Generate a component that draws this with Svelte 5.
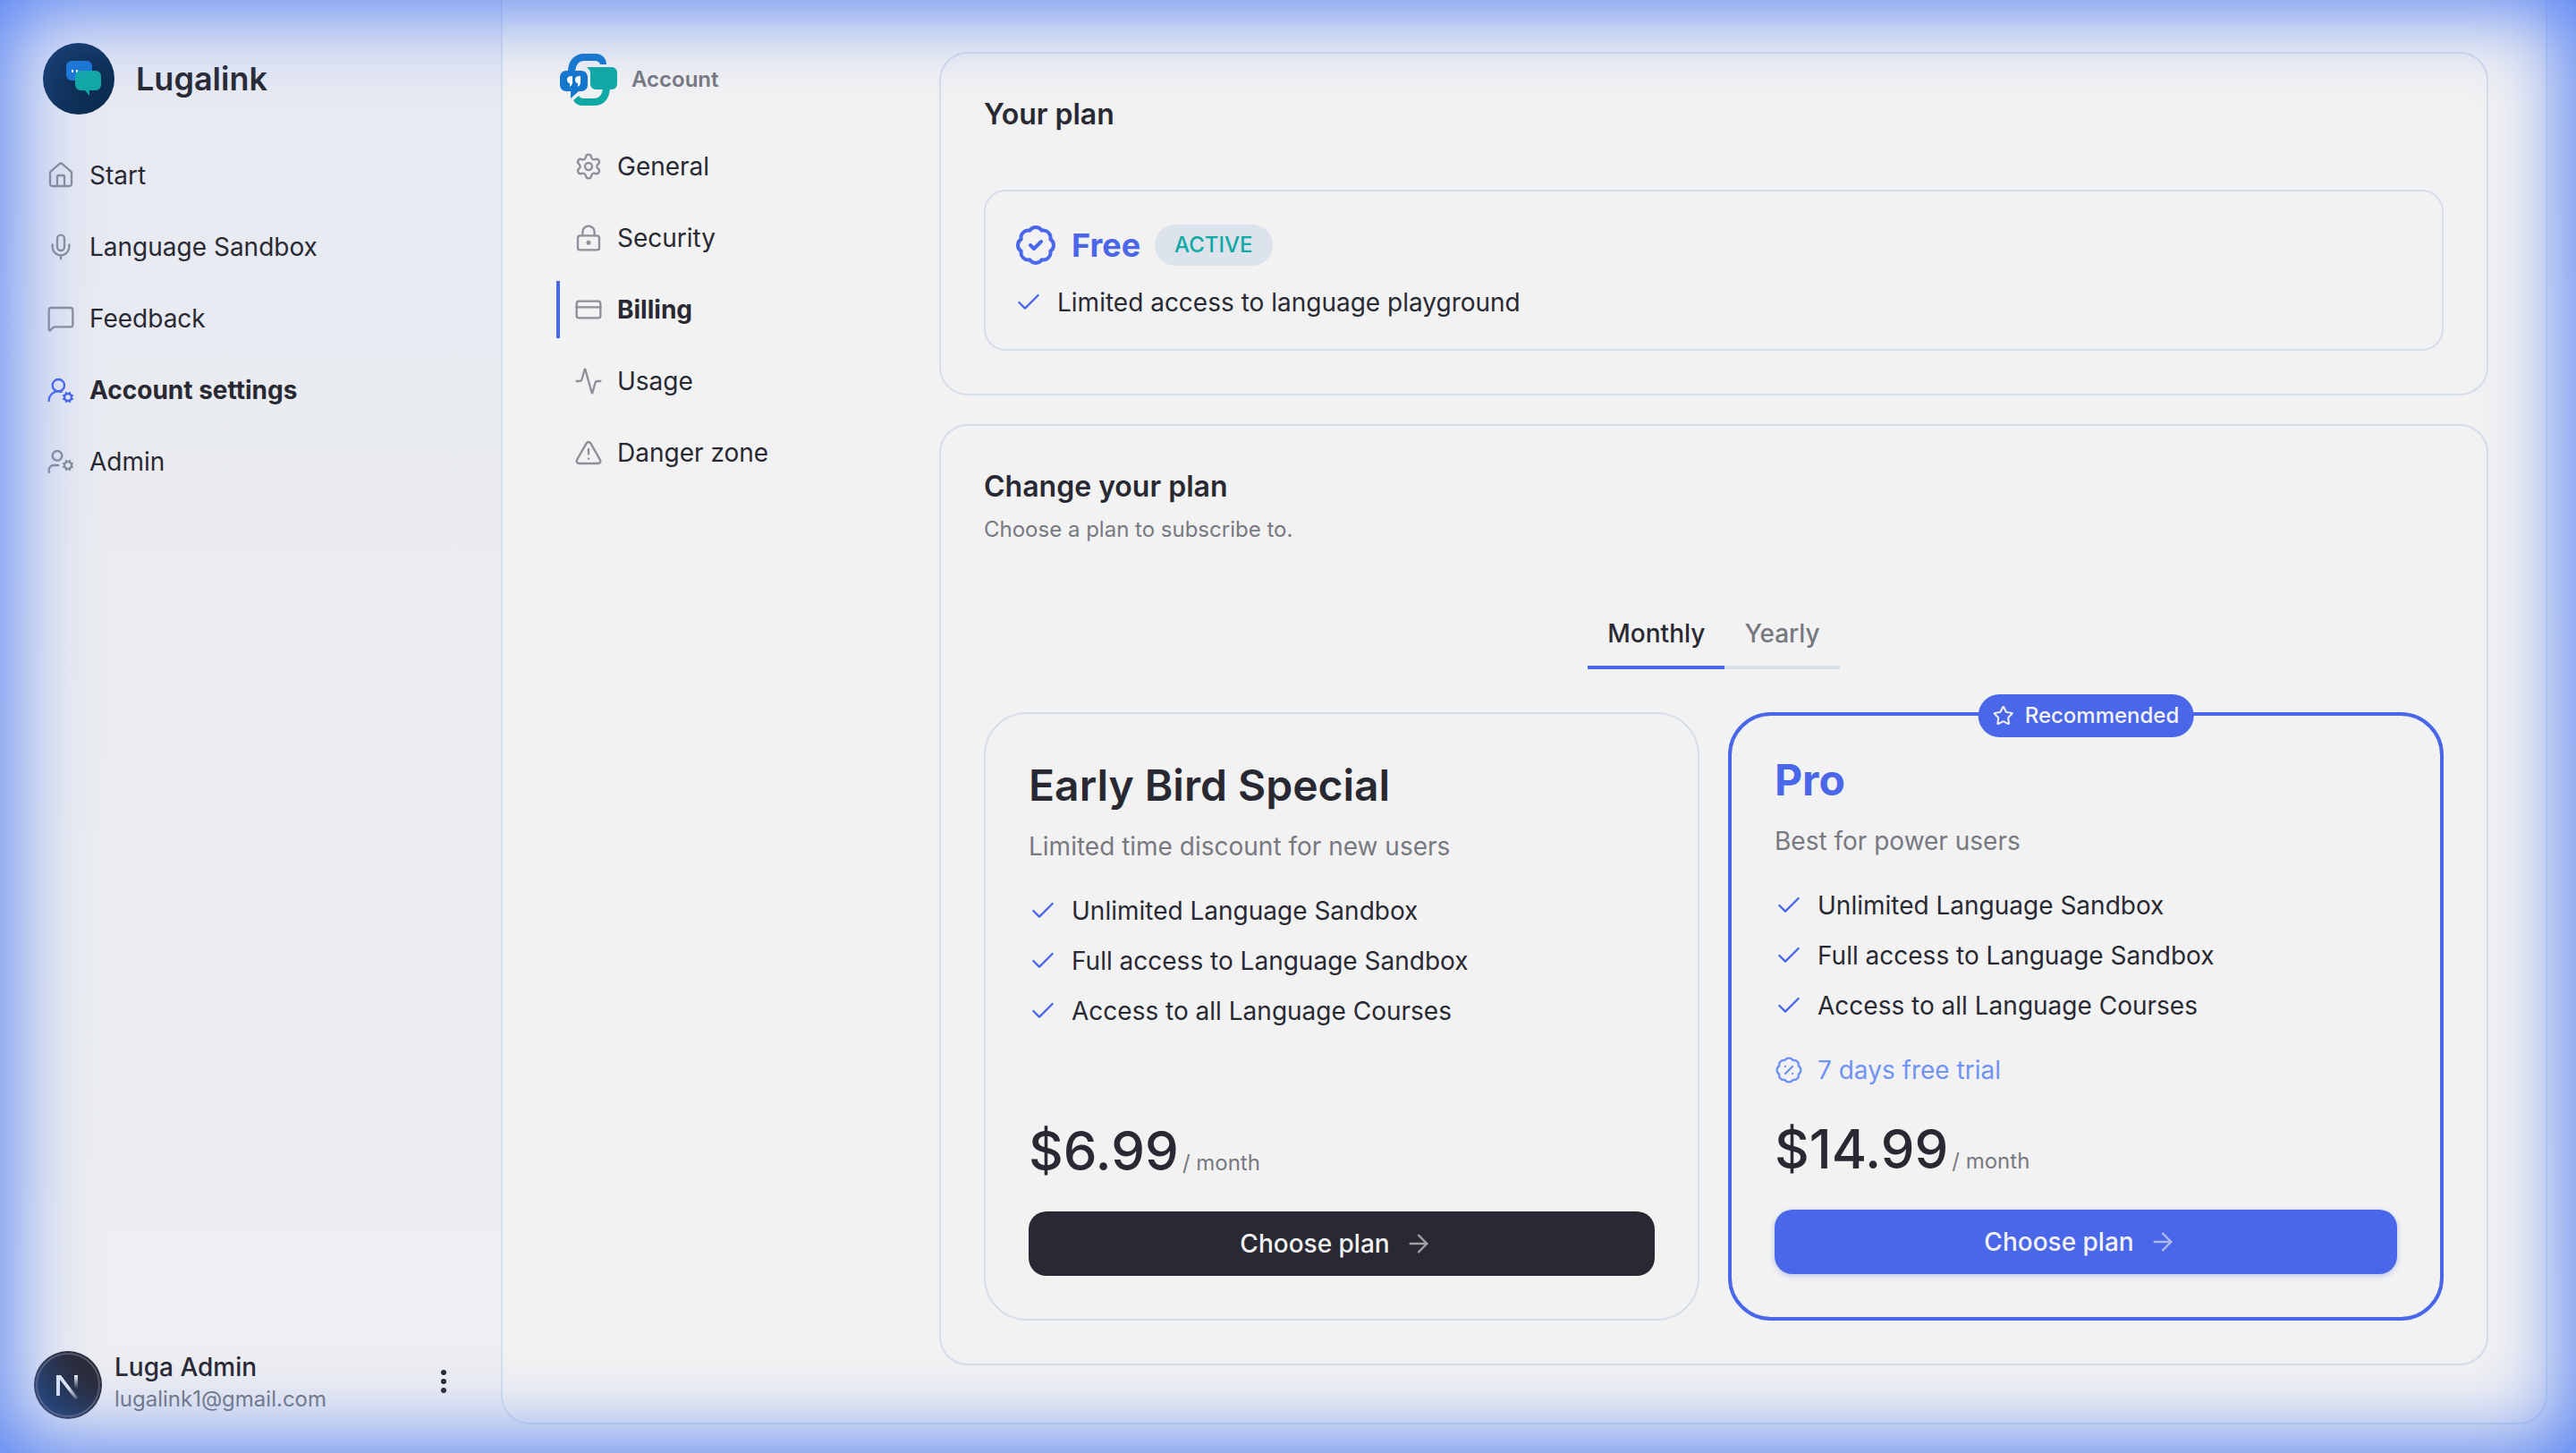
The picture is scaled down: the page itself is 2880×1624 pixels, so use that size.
<script lang="ts">
	type Icon = { paths: string[]; circles?: number[][]; rects?: number[][] };

	const badge =
		'M3.85 8.62a4 4 0 0 1 4.78-4.77 4 4 0 0 1 6.74 0 4 4 0 0 1 4.78 4.78 4 4 0 0 1 0 6.74 4 4 0 0 1-4.77 4.78 4 4 0 0 1-6.75 0 4 4 0 0 1-4.78-4.77 4 4 0 0 1 0-6.76Z';

	const icons: Record<string, Icon> = {
		home: {
			paths: [
				'M15 21v-8a1 1 0 0 0-1-1h-4a1 1 0 0 0-1 1v8',
				'M3 10a2 2 0 0 1 .709-1.528l7-5.999a2 2 0 0 1 2.582 0l7 5.999A2 2 0 0 1 21 10v9a2 2 0 0 1-2 2H5a2 2 0 0 1-2-2z'
			]
		},
		mic: {
			paths: [
				'M12 2a3 3 0 0 0-3 3v7a3 3 0 0 0 6 0V5a3 3 0 0 0-3-3Z',
				'M19 10v2a7 7 0 0 1-14 0v-2',
				'M12 19v3'
			]
		},
		message: {
			paths: [
				'M22 17a2 2 0 0 1-2 2H6.828a2 2 0 0 0-1.414.586l-2.202 2.202A.71.71 0 0 1 2 21.286V5a2 2 0 0 1 2-2h16a2 2 0 0 1 2 2z'
			]
		},
		account: {
			paths: [
				'm14.305 19.53.923-.382',
				'm15.228 16.852-.923-.383',
				'm16.852 15.228-.383-.923',
				'm16.852 20.772-.383.924',
				'm19.148 15.228.383-.923',
				'm19.53 21.696-.382-.924',
				'M2 21a8 8 0 0 1 10.434-7.62',
				'm20.772 16.852.924-.383',
				'm20.772 19.148.924.383'
			],
			circles: [[10, 8, 5], [18, 18, 3]]
		},
		admin: {
			paths: [
				'M10 15H6a4 4 0 0 0-4 4v2',
				'm14.305 16.53.923-.382',
				'm15.228 13.852-.923-.383',
				'm16.852 12.228-.383-.923',
				'm16.852 17.772-.383.924',
				'm19.148 12.228.383-.923',
				'm19.53 18.696-.382-.924',
				'm20.772 13.852.924-.383',
				'm20.772 16.148.924.383'
			],
			circles: [[18, 15, 3], [9, 7, 4]]
		},
		settings: {
			paths: [
				'M9.671 4.136a2.34 2.34 0 0 1 4.659 0 2.34 2.34 0 0 0 3.319 1.915 2.34 2.34 0 0 1 2.33 4.033 2.34 2.34 0 0 0 0 3.831 2.34 2.34 0 0 1-2.33 4.033 2.34 2.34 0 0 0-3.319 1.915 2.34 2.34 0 0 1-4.659 0 2.34 2.34 0 0 0-3.32-1.915 2.34 2.34 0 0 1-2.33-4.033 2.34 2.34 0 0 0 0-3.831A2.34 2.34 0 0 1 6.35 6.051a2.34 2.34 0 0 0 3.319-1.915'
			],
			circles: [[12, 12, 3]]
		},
		lock: {
			paths: ['M7 10V7a5 5 0 0 1 10 0v3'],
			circles: [[12, 16, 1]],
			rects: [[3, 10, 18, 12]]
		},
		card: { paths: ['M2 10h20'], rects: [[2, 5, 20, 14]] },
		activity: {
			paths: [
				'M22 12h-2.48a2 2 0 0 0-1.93 1.46l-2.35 8.36a.25.25 0 0 1-.48 0L9.24 2.18a.25.25 0 0 0-.48 0l-2.35 8.36A2 2 0 0 1 4.49 12H2'
			]
		},
		alert: {
			paths: [
				'm21.73 18-8-14a2 2 0 0 0-3.48 0l-8 14A2 2 0 0 0 4 21h16a2 2 0 0 0 1.73-3',
				'M12 9v4',
				'M12 17h.01'
			]
		},
		verified: { paths: [badge, 'm9 12 2 2 4-4'] },
		percent: { paths: [badge, 'm15 9-6 6', 'M9 9h.01', 'M15 15h.01'] },
		check: { paths: ['M20 6 9 17l-5-5'] },
		arrow: { paths: ['M5 12h14', 'm12 5 7 7-7 7'] },
		star: {
			paths: [
				'M11.525 2.295a.53.53 0 0 1 .95 0l2.31 4.679a2.123 2.123 0 0 0 1.595 1.16l5.166.756a.53.53 0 0 1 .294.904l-3.736 3.638a2.123 2.123 0 0 0-.611 1.878l.882 5.14a.53.53 0 0 1-.771.56l-4.618-2.428a2.122 2.122 0 0 0-1.973 0L6.396 21.01a.53.53 0 0 1-.77-.56l.881-5.139a2.122 2.122 0 0 0-.611-1.879L2.16 9.795a.53.53 0 0 1 .294-.906l5.165-.755a2.122 2.122 0 0 0 1.597-1.16z'
			]
		}
	};

	const mainNav = [
		{ label: 'Start', icon: 'home' },
		{ label: 'Language Sandbox', icon: 'mic' },
		{ label: 'Feedback', icon: 'message' },
		{ label: 'Account settings', icon: 'account', active: true },
		{ label: 'Admin', icon: 'admin' }
	];

	const accountNav = [
		{ label: 'General', icon: 'settings' },
		{ label: 'Security', icon: 'lock' },
		{ label: 'Billing', icon: 'card', active: true },
		{ label: 'Usage', icon: 'activity' },
		{ label: 'Danger zone', icon: 'alert' }
	];

	const features = [
		'Unlimited Language Sandbox',
		'Full access to Language Sandbox',
		'Access to all Language Courses'
	];

	const plans = [
		{
			name: 'Early Bird Special',
			description: 'Limited time discount for new users',
			price: { Monthly: '$6.99', Yearly: '$69.99' }
		},
		{
			name: 'Pro',
			description: 'Best for power users',
			price: { Monthly: '$14.99', Yearly: '$149.99' },
			trialDays: 7,
			recommended: true
		}
	];

	const intervals = ['Monthly', 'Yearly'] as const;
	let interval = $state<'Monthly' | 'Yearly'>('Monthly');
</script>

{#snippet icon(name: string, size = 32, stroke = 1.75)}
	<svg
		class="icon"
		width={size}
		height={size}
		viewBox="0 0 24 24"
		stroke-width={stroke}
		aria-hidden="true"
	>
		{#each icons[name].rects ?? [] as [x, y, width, height]}
			<rect {x} {y} {width} {height} rx="2" />
		{/each}
		{#each icons[name].paths as d}
			<path {d} />
		{/each}
		{#each icons[name].circles ?? [] as [cx, cy, r]}
			<circle {cx} {cy} {r} />
		{/each}
	</svg>
{/snippet}

<div class="app">
	<aside class="sidebar">
		<a class="brand" href="#start">
			<svg width="80" height="80" viewBox="0 0 80 80" aria-hidden="true">
				<circle cx="40" cy="40" r="40" fill="#0b2d50" />
				<rect x="26" y="20" width="29" height="22" rx="6" fill="#1976d2" />
				<path d="M32 30h2v3h-2zM37 30h2v3h-2z" fill="#fff" />
				<path
					d="M42 31h17a6 6 0 0 1 6 6v10a6 6 0 0 1-6 6h-7v6l-5-6h-5a6 6 0 0 1-6-6V37a6 6 0 0 1 6-6z"
					fill="#10a9a4"
				/>
			</svg>
			<span>Lugalink</span>
		</a>

		<nav class="nav" aria-label="Main">
			{#each mainNav as item}
				<a href="#{item.icon}" class:active={item.active}>
					{@render icon(item.icon)}
					<span>{item.label}</span>
				</a>
			{/each}
		</nav>

		<div class="user">
			<svg width="76" height="76" viewBox="0 0 76 76" aria-hidden="true">
				<defs>
					<linearGradient id="n-bar" x1="0" y1="0" x2="0" y2="1">
						<stop offset="0" stop-color="#fff" />
						<stop offset="1" stop-color="#fff" stop-opacity="0" />
					</linearGradient>
					<linearGradient id="n-stroke" gradientUnits="userSpaceOnUse" x1="40" y1="41" x2="49" y2="54">
						<stop offset="0" stop-color="#eef1f8" />
						<stop offset="1" stop-color="#eef1f8" stop-opacity="0.2" />
					</linearGradient>
					<linearGradient id="n-disc" x1="0" y1="1" x2="1" y2="0">
						<stop offset="0" stop-color="#123250" />
						<stop offset="0.7" stop-color="#292933" />
					</linearGradient>
				</defs>
				<circle cx="38" cy="38" r="38" fill="#2a2a33" />
				<circle cx="38" cy="38" r="35" fill="url(#n-disc)" stroke="#555962" stroke-width="2" />
				<path d="M25 50V27h5l19 25-3 2-17-22v18z" fill="url(#n-stroke)" />
				<rect x="45" y="27" width="4" height="15" fill="url(#n-bar)" />
			</svg>
			<div class="identity">
				<strong>Luga Admin</strong>
				<span>lugalink1@gmail.com</span>
			</div>
			<button class="more" aria-label="Account menu">
				<svg width="32" height="32" viewBox="0 0 32 32" aria-hidden="true">
					<circle cx="16" cy="6" r="3" />
					<circle cx="16" cy="16" r="3" />
					<circle cx="16" cy="26" r="3" />
				</svg>
			</button>
		</div>
	</aside>

	<div class="panel">
		<div class="subnav">
			<div class="subnav-title">
				<svg width="64" height="58" viewBox="0 0 64 58" aria-hidden="true">
					<path d="M9 20C9 8 16 0 27 0h13c7 0 12 5 12 12h-7c-1-3-3-4-6-4H27c-6 0-9 4-10 12z" fill="#1477cb" />
					<path d="M7 19h17a7 7 0 0 1 7 7v9a7 7 0 0 1-7 7h-3l-9 8v-8H7a7 7 0 0 1-7-7v-9a7 7 0 0 1 7-7z" fill="#1477cb" />
					<path d="M8 29c0-3 2-4 6-4v7c0 2-1 4-3 5v-4c-2 0-3-2-3-4zM17 29c0-3 2-4 6-4v7c0 2-1 4-3 5v-4c-2 0-3-2-3-4z" fill="#fff" />
					<path d="M30 16c1-1 2-1 4-1h24a6 6 0 0 1 6 6v13a6 6 0 0 1-6 6H40a6 6 0 0 1-6-6V22c0-3-1-5-4-6z" fill="#10a9a4" />
					<path d="M56 39c-1 12-7 19-18 19H26c-5 0-9-2-11-6l6-5c1 2 3 3 6 3h11c6 0 9-4 10-11z" fill="#10a9a4" />
				</svg>
				<h2>Account</h2>
			</div>
			<nav class="nav" aria-label="Account">
				{#each accountNav as item}
					<a href="#{item.icon}" class:active={item.active}>
						{@render icon(item.icon)}
						<span>{item.label}</span>
					</a>
				{/each}
			</nav>
		</div>

		<main>
			<section class="card">
				<h3>Your plan</h3>
				<div class="current">
					<div class="current-head">
						{@render icon('verified', 48, 2)}
						<h4>Free</h4>
						<span class="status">ACTIVE</span>
					</div>
					<ul>
						<li>{@render icon('check')}<span>Limited access to language playground</span></li>
					</ul>
				</div>
			</section>

			<section class="card">
				<h3>Change your plan</h3>
				<p class="hint">Choose a plan to subscribe to.</p>

				<div class="tabs" role="tablist">
					{#each intervals as value}
						<button
							role="tab"
							aria-selected={interval === value}
							class:selected={interval === value}
							onclick={() => (interval = value)}>{value}</button
						>
					{/each}
				</div>

				<div class="plans">
					{#each plans as plan}
						<article class="plan" class:recommended={plan.recommended}>
							{#if plan.recommended}
								<div class="ribbon">{@render icon('star', 24, 2)}<span>Recommended</span></div>
							{/if}
							<h4>{plan.name}</h4>
							<p class="description">{plan.description}</p>
							<ul>
								{#each features as feature}
									<li>{@render icon('check')}<span>{feature}</span></li>
								{/each}
							</ul>
							{#if plan.trialDays}
								<p class="trial">{@render icon('percent')}<span>{plan.trialDays} days free trial</span></p>
							{/if}
							<div class="price">
								<strong>{plan.price[interval]}</strong>
								<span>/ {interval === 'Monthly' ? 'month' : 'year'}</span>
							</div>
							<button class="choose"><span>Choose plan</span>{@render icon('arrow')}</button>
						</article>
					{/each}
				</div>
			</section>
		</main>
	</div>

	<div class="glow"></div>
</div>

<style>
	:global(body) {
		margin: 0;
	}

	.app {
		--ink: #292933;
		--muted: #777981;
		--primary: #4a67e9;
		--line: #d6deea;
		--page: #f2f2f2;
		display: flex;
		box-sizing: border-box;
		min-height: 100vh;
		padding: 0 32px 32px 0;
		background: linear-gradient(#e6e9f3, #eaecf0 40%, #eeeff1);
		color: var(--ink);
		font: 28px/40px Inter, 'Liberation Sans', sans-serif;
	}

	h2,
	h3,
	h4,
	p,
	ul {
		margin: 0;
		padding: 0;
	}

	ul {
		list-style: none;
	}

	a {
		color: inherit;
		text-decoration: none;
	}

	button {
		border: 0;
		padding: 0;
		background: none;
		color: inherit;
		font: inherit;
		cursor: pointer;
	}

	.icon {
		flex: none;
		fill: none;
		stroke: currentColor;
		stroke-linecap: round;
		stroke-linejoin: round;
	}

	.sidebar {
		display: flex;
		flex-direction: column;
		flex: none;
		box-sizing: border-box;
		width: 560px;
		padding: 48px 48px 6px 38px;
	}

	.brand {
		display: flex;
		align-items: center;
		gap: 24px;
		margin: 0 0 28px 10px;
		font-size: 36px;
		font-weight: 600;
	}

	.nav {
		display: flex;
		flex-direction: column;
		gap: 16px;

		a {
			display: flex;
			align-items: center;
			gap: 16px;
			height: 64px;
		}

		.icon {
			color: #8d9098;
		}

		.active {
			font-weight: 700;
		}
	}

	.sidebar .nav {
		flex: 1;
		margin: 0 0 0 14px;
		padding-top: 8px;

		.active .icon {
			color: var(--primary);
		}
	}

	.user {
		display: flex;
		align-items: center;
		gap: 14px;
	}

	.identity {
		display: flex;
		flex-direction: column;
		flex: 1;
		padding-bottom: 4px;

		strong {
			font-weight: 500;
			line-height: 36px;
		}

		span {
			color: var(--muted);
			font-size: 24px;
			line-height: 36px;
		}
	}

	.more {
		padding-bottom: 8px;

		svg {
			display: block;
			fill: var(--ink);
		}
	}

	.panel {
		display: flex;
		flex: 1;
		align-items: flex-start;
		box-sizing: border-box;
		padding: 58px 64px 64px 60px;
		border: 2px solid var(--line);
		border-top: 0;
		border-radius: 0 0 32px 32px;
		background: var(--page);
	}

	.subnav {
		flex: none;
		width: 428px;
	}

	.subnav-title {
		display: flex;
		align-items: center;
		gap: 16px;
		margin: 2px 0 36px 4px;

		h2 {
			color: var(--muted);
			font-size: 24px;
			font-weight: 600;
		}
	}

	.subnav .nav a {
		padding-left: 16px;
		border-left: 4px solid transparent;
	}

	.subnav .nav .active {
		border-color: var(--primary);
	}

	main {
		display: flex;
		flex: 1;
		flex-direction: column;
		gap: 32px;
	}

	.card {
		padding: 48px;
		border: 2px solid var(--line);
		border-radius: 32px;

		h3 {
			font-size: 32px;
			font-weight: 600;
			line-height: 40px;
		}
	}

	.current {
		margin-top: 64px;
		padding: 32px;
		border: 2px solid var(--line);
		border-radius: 24px;
	}

	.current-head {
		display: flex;
		align-items: center;
		gap: 16px;
		margin-bottom: 20px;
		padding-top: 4px;
		color: var(--primary);

		h4 {
			font-size: 36px;
			font-weight: 700;
			line-height: 48px;
		}
	}

	.status {
		padding: 3px 22px;
		border-radius: 24px;
		background: #dde3ec;
		color: #10a9a4;
		font-size: 24px;
		font-weight: 500;
	}

	li {
		display: flex;
		align-items: center;
		gap: 16px;

		.icon {
			color: var(--primary);
		}
	}

	.hint {
		padding-top: 8px;
		color: var(--muted);
		font-size: 24px;
	}

	.tabs {
		display: flex;
		justify-content: center;
		margin: 56px 0 48px;

		button {
			padding: 20px 22px 16px;
			border-bottom: 4px solid var(--line);
			color: var(--muted);
			font-weight: 500;
		}

		.selected {
			border-color: var(--primary);
			color: var(--ink);
		}
	}

	.plans {
		display: grid;
		grid-template-columns: 1fr 1fr;
		gap: 32px;
	}

	.plan {
		position: relative;
		display: flex;
		flex-direction: column;
		box-sizing: border-box;
		min-height: 680px;
		padding: 48px;
		border: 2px solid var(--line);
		border-radius: 48px;

		h4 {
			font-size: 48px;
			font-weight: 600;
			line-height: 64px;
		}

		ul {
			display: flex;
			flex-direction: column;
			gap: 16px;
			margin-top: 32px;
		}
	}

	.recommended {
		padding-top: 40px;
		border: 4px solid var(--primary);

		h4 {
			color: var(--primary);
			font-weight: 700;
		}
	}

	.ribbon {
		position: absolute;
		top: -24px;
		left: 50%;
		display: flex;
		align-items: center;
		gap: 12px;
		padding: 4px 16px;
		border-radius: 24px;
		background: var(--primary);
		color: #f2f2f2;
		font-size: 24px;
		font-weight: 500;
		transform: translateX(-50%);
	}

	.description {
		margin-top: 16px;
		color: var(--muted);
	}

	.trial {
		display: flex;
		align-items: center;
		gap: 16px;
		margin-top: 32px;
		color: #6f93f2;
	}

	.price {
		display: flex;
		align-items: baseline;
		gap: 4px;
		margin: auto 0 32px;

		strong {
			font-size: 60px;
			font-weight: 500;
			line-height: 72px;
		}

		span {
			color: var(--muted);
			font-size: 24px;
		}
	}

	.choose {
		display: flex;
		align-items: center;
		justify-content: center;
		gap: 16px;
		height: 72px;
		padding-right: 12px;
		border-radius: 20px;
		background: var(--ink);
		color: #f2f2f2;
		font-weight: 500;

		.icon {
			opacity: 0.6;
		}
	}

	.recommended .choose {
		background: var(--primary);
		box-shadow: 0 2px 6px #4a67e955;
	}

	.glow {
		position: fixed;
		inset: 0;
		box-shadow: inset 0 0 92px 8px #4f7df3;
		pointer-events: none;
	}
</style>
